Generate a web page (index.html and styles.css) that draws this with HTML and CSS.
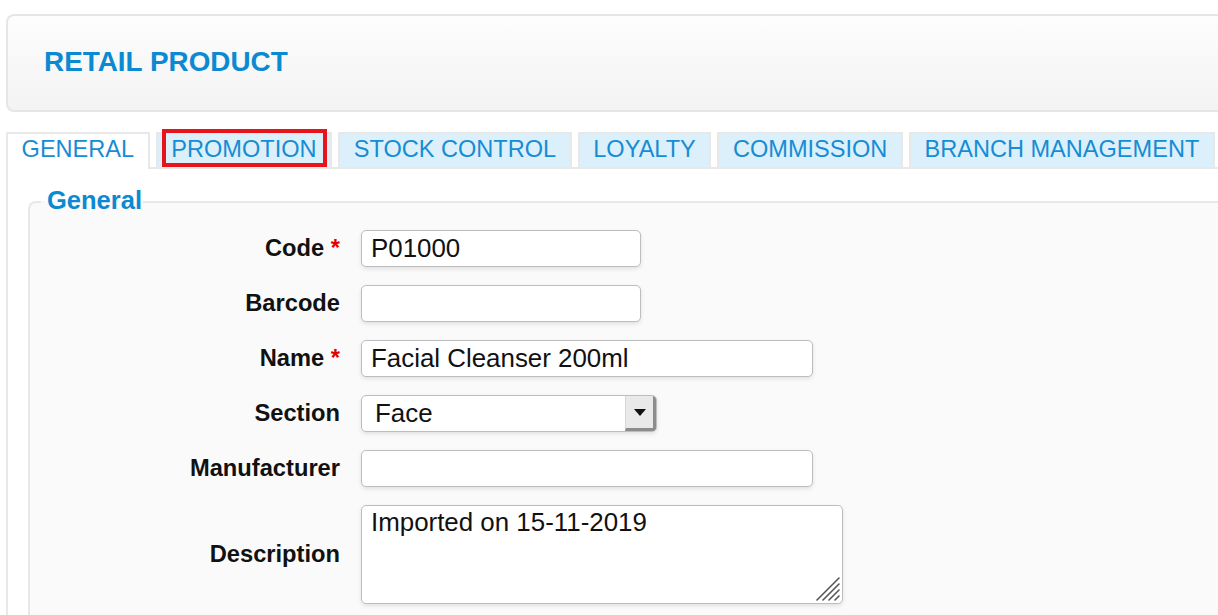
FILE: index.html
```html
<!DOCTYPE html>
<html lang="en">
<head>
<meta charset="utf-8">
<title>Retail Product</title>
<link rel="stylesheet" href="styles.css">
</head>
<body>
<div class="page">
  <div class="header">
    <h1 class="title">RETAIL PRODUCT</h1>
  </div>

  <div class="tabs">
    <div class="tab active">GENERAL</div>
    <div class="tab">PROMOTION<span class="mark"></span></div>
    <div class="tab">STOCK CONTROL</div>
    <div class="tab">LOYALTY</div>
    <div class="tab">COMMISSION</div>
    <div class="tab">BRANCH MANAGEMENT</div>
  </div>

  <div class="panel">
    <fieldset class="group">
      <legend class="legend">General</legend>
      <div class="form">
        <label class="label">Code <span class="req">*</span></label>
        <input class="input w-s" type="text" value="P01000">

        <label class="label">Barcode</label>
        <input class="input w-s" type="text" value="">

        <label class="label">Name <span class="req">*</span></label>
        <input class="input w-m" type="text" value="Facial Cleanser 200ml">

        <label class="label">Section</label>
        <div class="select">
          <span class="select-value">Face</span>
          <span class="select-btn">
            <svg width="12" height="7" viewBox="0 0 12 7"><path d="M0 0 H12 L6 7 Z" fill="#111"/></svg>
          </span>
        </div>

        <label class="label">Manufacturer</label>
        <input class="input w-m" type="text" value="">

        <label class="label">Description</label>
        <div class="ta-wrap">
          <textarea class="textarea">Imported on 15-11-2019</textarea>
          <svg class="grip" width="26" height="26" viewBox="0 0 26 26">
            <g stroke="#555" stroke-width="1.6" stroke-linecap="round">
              <line x1="3" y1="25" x2="25" y2="3"/>
              <line x1="9" y1="25" x2="25" y2="9"/>
              <line x1="15" y1="25" x2="25" y2="15"/>
              <line x1="21" y1="25" x2="25" y2="21"/>
            </g>
          </svg>
        </div>
      </div>
    </fieldset>
  </div>
</div>
</body>
</html>
```

FILE: styles.css
```css
html, body {
  margin: 0;
  padding: 0;
  overflow: hidden;
  background: #ffffff;
}

body {
  font-family: "Liberation Sans", Arial, Helvetica, sans-serif;
  color: #111;
}

.page {
  width: 1300px;
  padding: 14px 0 0 6px;
}

/* Header */
.header {
  height: 98px;
  box-sizing: border-box;
  border: 2px solid #e6e6e6;
  border-right: 0;
  border-radius: 8px 0 0 8px;
  background: linear-gradient(#fdfdfd, #f3f3f3);
  display: flex;
  align-items: center;
  padding: 0 0 2px 36px;
}

.title {
  margin: 0;
  font-size: 27.9px;
  line-height: 32px;
  font-weight: bold;
  color: #0b8ad2;
}

/* Tabs */
.tabs {
  display: flex;
  align-items: flex-start;
  gap: 6px;
  margin-top: 20px;
  position: relative;
  z-index: 1;
  height: 35px;
}

.tab {
  position: relative;
  height: 35px;
  box-sizing: border-box;
  border: 2px solid #e8e8e8;
  border-bottom: 0;
  background: #dbf0fb;
  color: #168cd4;
  font-size: 23.55px;
  padding: 0 13.6px 2px;
  display: flex;
  align-items: center;
  white-space: nowrap;
}

.tab.active {
  background: #ffffff;
  height: 37px;
  padding-bottom: 4px;
}

.mark {
  position: absolute;
  left: 4px;
  right: 3px;
  top: -5px;
  bottom: 0;
  border: 4px solid #e8141c;
  box-sizing: border-box;
  pointer-events: none;
}

/* Panel */
.panel {
  border-top: 2px solid #e8e8e8;
  border-left: 2px solid #e8e8e8;
  background: #ffffff;
  padding: 17px 0 0 20px;
}

.group {
  margin: 0;
  min-width: 0;
  border: 2px solid #e8e8e8;
  border-right: 0;
  border-bottom: 0;
  border-radius: 8px 0 0 0;
  background: #fafafa;
  padding: 12px 0 40px 0;
}

.legend {
  margin-left: 11px;
  padding: 0 1px 4px 6px;
  font-size: 25.5px;
  line-height: 28px;
  font-weight: bold;
  color: #0b8ad2;
}

/* Form */
.form {
  display: grid;
  grid-template-columns: 310px 1fr;
  column-gap: 21px;
  row-gap: 18px;
  align-items: center;
}

.label {
  text-align: right;
  font-weight: bold;
  font-size: 23.7px;
  color: #111;
  white-space: nowrap;
}

.req {
  color: #e50000;
}

.input,
.textarea {
  display: block;
  box-sizing: border-box;
  height: 37px;
  border: 1px solid #bdbdbd;
  border-radius: 5px;
  box-shadow: 0 2px 4px rgba(0, 0, 0, 0.10);
  background: #ffffff;
  font-family: "Liberation Sans", Arial, Helvetica, sans-serif;
  font-size: 25.9px;
  color: #111;
  padding: 0 9px;
  margin: 0;
  outline: none;
}

.w-s { width: 280px; }
.w-m { width: 452px; }

.select {
  display: flex;
  width: 296px;
  height: 37px;
  box-sizing: border-box;
  border: 1px solid #bdbdbd;
  border-radius: 5px;
  box-shadow: 0 2px 4px rgba(0, 0, 0, 0.10);
  background: #ffffff;
  overflow: hidden;
}

.select-value {
  flex: 1;
  display: flex;
  align-items: center;
  padding-left: 13px;
  font-size: 25.9px;
  color: #111;
}

.select-btn {
  width: 27px;
  display: flex;
  align-items: center;
  justify-content: center;
  background: #e9e9e9;
  border-left: 1px solid #d6d6d6;
  border-right: 3px solid #8c8c8c;
  border-bottom: 3px solid #8c8c8c;
  box-sizing: content-box;
}

.ta-wrap {
  position: relative;
  width: 482px;
}

.textarea {
  width: 482px;
  height: 99px;
  padding: 2px 9px;
  line-height: 29px;
  resize: none;
  overflow: hidden;
}

.grip {
  position: absolute;
  right: 3px;
  bottom: 3px;
}
```
